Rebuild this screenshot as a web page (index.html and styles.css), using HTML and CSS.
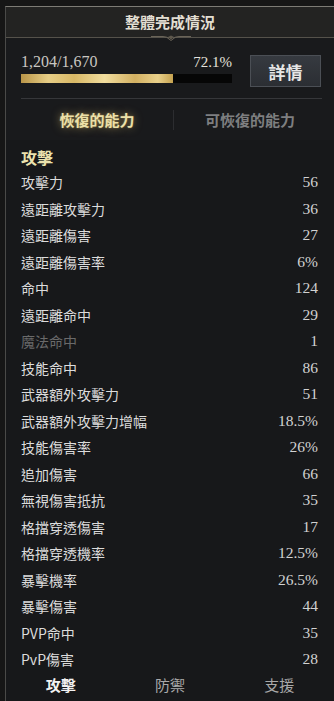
FILE: index.html
```html
<!DOCTYPE html>
<html lang="zh-Hant">
<head>
<meta charset="utf-8">
<link rel="stylesheet" href="styles.css">
</head>
<body>
<div class="panel">
  <div class="header">
    <div class="title">整體完成情況</div>
    <div class="ornament">
      <svg width="40" height="8" viewBox="0 0 40 8"><path d="M0 2.5 H12 Q16 2.5 18 5 L20 6.5 L22 5 Q24 2.5 28 2.5 H40" fill="none" stroke="#6a6458" stroke-width="1"/><path d="M17 3 L20 5.5 L23 3 L20 1.5 Z" fill="#5e584c"/></svg>
    </div>
  </div>
  <div class="progress">
    <div class="prog-left">
      <div class="prog-nums"><span>1,204/1,670</span><span>72.1%</span></div>
      <div class="bar"><div class="fill" style="width:72.1%"></div></div>
    </div>
    <div class="btn">詳情</div>
  </div>
  <div class="sep"></div>
  <div class="tabs">
    <div class="tab active">恢復的能力</div>
    <div class="tab-div"></div>
    <div class="tab">可恢復的能力</div>
  </div>
  <div class="list">
    <div class="section">攻擊</div>
    <div class="row"><span>攻擊力</span><span class="v">56</span></div>
    <div class="row"><span>遠距離攻擊力</span><span class="v">36</span></div>
    <div class="row"><span>遠距離傷害</span><span class="v">27</span></div>
    <div class="row"><span>遠距離傷害率</span><span class="v">6%</span></div>
    <div class="row"><span>命中</span><span class="v">124</span></div>
    <div class="row"><span>遠距離命中</span><span class="v">29</span></div>
    <div class="row dim"><span>魔法命中</span><span class="v">1</span></div>
    <div class="row"><span>技能命中</span><span class="v">86</span></div>
    <div class="row"><span>武器額外攻擊力</span><span class="v">51</span></div>
    <div class="row"><span>武器額外攻擊力增幅</span><span class="v">18.5%</span></div>
    <div class="row"><span>技能傷害率</span><span class="v">26%</span></div>
    <div class="row"><span>追加傷害</span><span class="v">66</span></div>
    <div class="row"><span>無視傷害抵抗</span><span class="v">35</span></div>
    <div class="row"><span>格擋穿透傷害</span><span class="v">17</span></div>
    <div class="row"><span>格擋穿透機率</span><span class="v">12.5%</span></div>
    <div class="row"><span>暴擊機率</span><span class="v">26.5%</span></div>
    <div class="row"><span>暴擊傷害</span><span class="v">44</span></div>
    <div class="row"><span>PVP命中</span><span class="v">35</span></div>
    <div class="row"><span>PvP傷害</span><span class="v">28</span></div>
  </div>
  <div class="bottom">
    <div class="btab active">攻擊</div>
    <div class="btab">防禦</div>
    <div class="btab">支援</div>
  </div>
</div>
</body>
</html>
```
FILE: styles.css
```css
html, body {
  margin: 0;
  padding: 0;
}
body {
  width: 334px;
  height: 701px;
  overflow: hidden;
  background: #161616;
  font-family: "Noto Sans CJK TC", "Noto Sans", sans-serif;
}
.panel {
  margin: 6px 0 0 5px;
  height: 695px;
  border-left: 1px solid #4a4a48;
  border-top: 1px solid #7d7b75;
  background: #191a1c;
  display: flex;
  flex-direction: column;
  box-sizing: border-box;
}
.header {
  height: 30px;
  flex: none;
  background: #232322;
  position: relative;
  display: flex;
  align-items: center;
  justify-content: center;
  border-bottom: 1px solid #55524b;
}
.title {
  color: #e2ded2;
  font-size: 15px;
  font-weight: 700;
  line-height: 20px;
}
.ornament {
  position: absolute;
  left: 145px;
  bottom: -5px;
  height: 8px;
  line-height: 0;
}
.progress {
  flex: none;
  display: flex;
  padding: 16px 12px 0 15px;
  height: 60px;
  box-sizing: border-box;
  gap: 18px;
}
.prog-left {
  width: 211px;
  display: flex;
  flex-direction: column;
}
.prog-nums {
  display: flex;
  justify-content: space-between;
  font-family: "Liberation Serif", serif;
  font-size: 16px;
  line-height: 16px;
  height: 16px;
  color: #c9c7c2;
}
.prog-nums span:last-child {
  color: #e4e2dc;
  font-size: 15px;
}
.bar {
  margin-top: 4px;
  height: 9px;
  background: #060606;
}
.fill {
  height: 100%;
  background: linear-gradient(90deg, #b99548 0%, #e6cd86 18%, #d8b866 35%, #f1dd9e 55%, #d2b062 75%, #e9d08a 90%, #c5a250 100%);
}
.btn {
  margin-top: 1px;
  width: 71px;
  height: 32px;
  box-sizing: border-box;
  background: linear-gradient(180deg, #363a40, #2b2e33);
  border: 1px solid #4b4f55;
  color: #e6e6e6;
  font-size: 17px;
  font-weight: 700;
  display: flex;
  align-items: center;
  justify-content: center;
}
.sep {
  flex: none;
  margin: 0 12px 0 15px;
  height: 1px;
  background: #36373a;
}
.tabs {
  flex: none;
  height: 41px;
  display: flex;
  align-items: center;
  padding: 0 8px 0 15px;
}
.tab {
  flex: 1;
  text-align: center;
  font-size: 15px;
  font-weight: 700;
  color: #7e7f80;
  line-height: 20px;
}
.tab.active {
  color: #ece0a8;
  text-shadow: 0 0 8px rgba(220, 190, 110, 0.6), 0 0 2px rgba(220, 190, 110, 0.4);
}
.tab-div {
  width: 1px;
  height: 20px;
  background: #2c2d30;
}
.list {
  flex: 1;
  min-height: 0;
  overflow: hidden;
  padding: 5px 15px 0 15px;
  background: #17181a;
}
.section {
  height: 24px;
  line-height: 24px;
  color: #ebe2ae;
  font-size: 16px;
  font-weight: 700;
}
.row {
  height: 26.5px;
  display: flex;
  align-items: center;
  justify-content: space-between;
  color: #dcdcdc;
  font-size: 14px;
}
.row .v {
  font-family: "Liberation Serif", serif;
  font-size: 15.5px;
  color: #d2d2d2;
  margin-right: 1px;
}
.row.dim {
  color: #6a6a6a;
}
.row.dim .v {
  color: #d2d2d2;
}
.bottom {
  flex: none;
  height: 34px;
  display: flex;
  align-items: flex-start;
  background: #17181a;
}
.btab {
  flex: 1;
  text-align: center;
  font-size: 15px;
  color: #a9a9a9;
  line-height: 20px;
  padding-top: 8px;
}
.btab.active {
  color: #f2f2f2;
  font-weight: 700;
}
```
